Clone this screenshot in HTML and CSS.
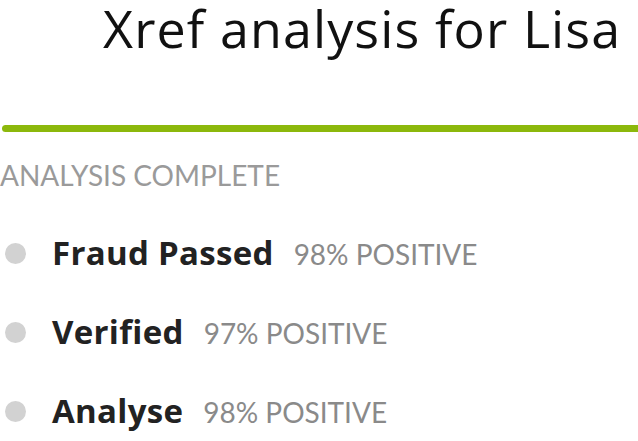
FILE: index.html
```html
<!DOCTYPE html>
<html>
<head>
<meta charset="utf-8">
<link rel="stylesheet" href="styles.css">
</head>
<body>
<div class="page">
  <h1 class="title">Xref analysis for Lisa</h1>
  <div class="rule"></div>
  <div class="status">ANALYSIS COMPLETE</div>
  <ul class="checks">
    <li class="check"><span class="dot"></span><span class="label"><span class="name">Fraud Passed</span><span class="score">98% POSITIVE</span></span></li>
    <li class="check"><span class="dot"></span><span class="label"><span class="name">Verified</span><span class="score">97% POSITIVE</span></span></li>
    <li class="check"><span class="dot"></span><span class="label"><span class="name">Analyse</span><span class="score">98% POSITIVE</span></span></li>
  </ul>
</div>
</body>
</html>
```
FILE: styles.css
```css
html, body {
  margin: 0;
  padding: 0;
  background: #ffffff;
  overflow: hidden;
}
.page {
  width: 638px;
  height: 441px;
  display: flex;
  flex-direction: column;
}
.title {
  margin: 0;
  padding-left: 103px;
  font-family: "Open Sans", "Noto Sans", sans-serif;
  font-weight: 400;
  font-size: 52px;
  letter-spacing: 1.1px;
  line-height: 56px;
  height: 56px;
  color: #111111;
  white-space: nowrap;
}
.rule {
  margin-top: 69px;
  margin-left: 2px;
  width: 660px;
  height: 7px;
  flex: none;
  background: #8cb80c;
  border-radius: 4px;
}
.status {
  margin-top: 27px;
  font-family: Lato, "Noto Sans", sans-serif;
  font-size: 28px;
  line-height: 32px;
  color: #9a9a9a;
  white-space: nowrap;
}
.checks {
  list-style: none;
  margin: 40px 0 0 0;
  padding: 0;
  display: flex;
  flex-direction: column;
  gap: 35px;
}
.check {
  display: flex;
  align-items: flex-start;
  height: 44px;
  white-space: nowrap;
}
.dot {
  width: 21px;
  height: 21px;
  border-radius: 50%;
  background: #d2d2d2;
  margin-left: 5px;
  margin-top: 12px;
  flex: none;
}
.label {
  margin-left: 26px;
  display: flex;
  align-items: baseline;
}
.name {
  font-family: "Open Sans", "Noto Sans", sans-serif;
  font-weight: 700;
  font-size: 33px;
  letter-spacing: 0.3px;
  line-height: 44px;
  color: #222222;
}
.score {
  margin-left: 20px;
  font-family: Lato, "Noto Sans", sans-serif;
  font-size: 28px;
  line-height: 32px;
  color: #8a8a8a;
}
```
